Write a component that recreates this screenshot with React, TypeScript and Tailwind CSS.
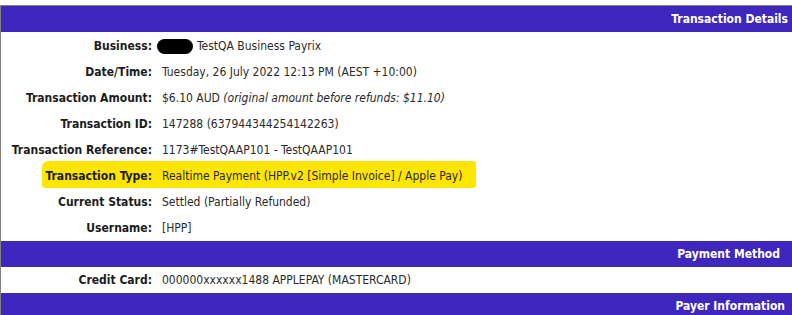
const rows: { label: string; value: React.ReactNode; highlight?: boolean }[] = [
  {
    label: "Business:",
    value: (
      <span className="flex items-center">
        <span className="mr-[4px] ml-[-5px] inline-block h-[15px] w-[36px] rounded-full bg-black" />
        TestQA Business Payrix
      </span>
    ),
  },
  { label: "Date/Time:", value: "Tuesday, 26 July 2022 12:13 PM (AEST +10:00)" },
  {
    label: "Transaction Amount:",
    value: (
      <>
        $6.10 AUD <i>(original amount before refunds: $11.10)</i>
      </>
    ),
  },
  { label: "Transaction ID:", value: "147288 (637944344254142263)" },
  { label: "Transaction Reference:", value: "1173#TestQAAP101 - TestQAAP101" },
  {
    label: "Transaction Type:",
    value: "Realtime Payment (HPP.v2 [Simple Invoice] / Apple Pay)",
    highlight: true,
  },
  { label: "Current Status:", value: "Settled (Partially Refunded)" },
  { label: "Username:", value: "[HPP]" },
];

function Bar({ title, pad }: { title: string; pad: string }) {
  return (
    <div className={`flex h-[26px] items-center justify-end bg-[#3f27bd] text-[12px] font-bold text-white ${pad}`}>
      {title}
    </div>
  );
}

function Row({ label, value, highlight }: { label: string; value: React.ReactNode; highlight?: boolean }) {
  return (
    <div className="relative flex h-[26px] items-center">
      {highlight && (
        <span className="absolute left-[41px] top-[-2px] h-[27px] w-[434px] rounded-[3px] rounded-tl-[6px] bg-[#ffe600]" />
      )}
      <span className="relative w-[151px] shrink-0 text-right font-bold text-[#1c1c1c]">{label}</span>
      <span className="relative ml-[10px] text-[#2a2a2a]">{value}</span>
    </div>
  );
}

export default function App() {
  return (
    <div className="h-[315px] w-[792px] overflow-hidden bg-white pt-[5px] font-['DejaVu_Sans_Condensed','DejaVu_Sans',sans-serif] text-[12px]">
      <div className="h-full border-t border-l border-[#808080]">
        <Bar title="Transaction Details" pad="pr-[4px]" />
        <div className="pt-[1px]">
          {rows.map((r) => (
            <Row key={r.label} {...r} />
          ))}
        </div>
        <Bar title="Payment Method" pad="pr-[12px]" />
        <Row label="Credit Card:" value="000000xxxxxx1488 APPLEPAY (MASTERCARD)" />
        <Bar title="Payer Information" pad="pr-[7px]" />
      </div>
    </div>
  );
}
